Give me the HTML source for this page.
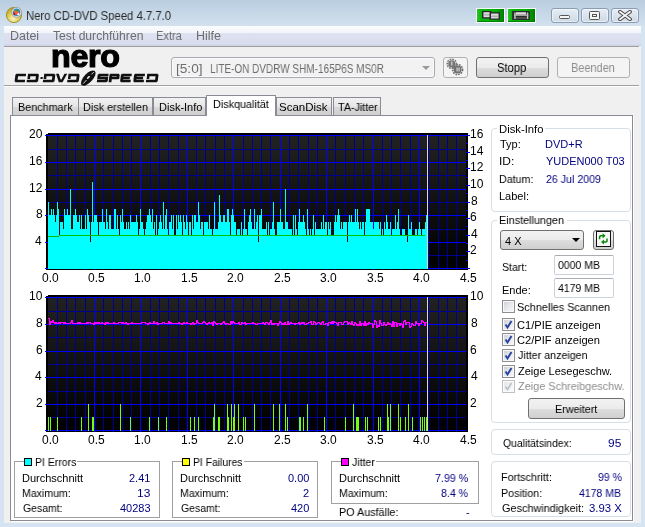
<!DOCTYPE html>
<html><head><meta charset="utf-8"><style>
*{margin:0;padding:0;box-sizing:border-box}
html,body{width:645px;height:527px;overflow:hidden;background:#d6e3f0;font-family:"Liberation Sans", sans-serif;position:relative}
.a{position:absolute}
.t{position:absolute;white-space:nowrap;font-family:"Liberation Sans", sans-serif;line-height:1;transform-origin:0 0;will-change:transform}
.btn{position:absolute;border:1px solid #707070;border-radius:3px;background:linear-gradient(#f2f2f2 0%,#ebebeb 50%,#dddddd 51%,#cfcfcf 100%);}
.btnd{position:absolute;border:1px solid #adb2b5;border-radius:3px;background:#f4f4f4;}
.grp{position:absolute;border:1px solid #d5dfe5;border-radius:4px}
.cgrp{position:absolute;border:1px solid #a0a0a0;box-shadow:1px 1px 0 #fff, inset 1px 1px 0 #fff}
.cb{position:absolute;width:13px;height:13px;border:1px solid #8f8f8f;box-shadow:inset 0 0 0 1px #f8f8f8;background:linear-gradient(135deg,#c9ced8,#e6e8ec 50%,#f8f8f8)}
.tab{position:absolute;top:97px;height:18px;border:1px solid #898c95;border-bottom:none;background:linear-gradient(#f2f2f2,#e6e6e6 50%,#d9d9d9 51%,#d0d0d0)}
</style></head><body>
<!-- window bg / title bar -->
<div class="a" style="left:0;top:0;width:645px;height:26px;background:linear-gradient(#b9cde0,#d3e1ee)"></div>
<div class="a" style="left:0;top:26px;width:645px;height:501px;background:#d6e3f0"></div>
<!-- app icon -->
<svg class="a" style="left:0;top:0" width="30" height="28" shape-rendering="geometricPrecision">
<defs><radialGradient id="ic1" cx="0.45" cy="0.75" r="0.7"><stop offset="0" stop-color="#f8f0c8"/><stop offset="0.5" stop-color="#e0cf58"/><stop offset="1" stop-color="#b8a220"/></radialGradient></defs>
<circle cx="14" cy="15" r="7.6" fill="url(#ic1)" stroke="#9c8a14" stroke-width="0.9"/>
<circle cx="16.6" cy="12.3" r="5" fill="#e8e8e8" stroke="#9a9a9a" stroke-width="0.9"/>
<circle cx="16.6" cy="12.3" r="3.7" fill="#2288dd"/>
<path d="M13.6,11.2 L17.5,10 L19.8,13.8 L16.2,15.2 Z" fill="#f06030"/>
<path d="M16.5,9 L19.5,10.5 L18.8,11.5 L16,10.2Z" fill="#30a040"/>
<path d="M13,12.5 L15,13.2 L15.2,15.6 L13.4,14.6Z" fill="#b01010"/>
<circle cx="18.4" cy="14.2" r="1.1" fill="#fff"/>
<circle cx="13.8" cy="10.6" r="0.7" fill="#ffd020"/>
</svg>
<!-- green buttons -->
<div class="a" style="left:476px;top:8px;width:29px;height:15px;background:rgba(255,255,255,0.85)"></div>
<div class="a" style="left:477px;top:9px;width:27px;height:13px;background:linear-gradient(90deg,#2cc42c 0%,#0cb40c 15%,#00b000 70%,#007a00 100%);box-shadow:inset 0 -1px 0 #008000"></div>
<svg class="a" style="left:477px;top:9px" width="27" height="13">
<rect x="5" y="2" width="9.5" height="7.5" fill="#2a2a2a"/><rect x="6.5" y="3.2" width="6.5" height="5" fill="#dcdcdc"/><rect x="6.5" y="5.5" width="6.5" height="0.8" fill="#909090"/>
<rect x="12.5" y="3.2" width="10.5" height="7.5" fill="#2a2a2a"/><rect x="14" y="4.5" width="7.5" height="5" fill="#d8d8d8"/><rect x="14" y="6.8" width="7.5" height="0.8" fill="#909090"/>
</svg>
<div class="a" style="left:507px;top:8px;width:29px;height:15px;background:rgba(255,255,255,0.85)"></div>
<div class="a" style="left:508px;top:9px;width:27px;height:13px;background:linear-gradient(90deg,#2cc42c 0%,#0cb40c 15%,#00b000 70%,#007a00 100%);box-shadow:inset 0 -1px 0 #008000"></div>
<svg class="a" style="left:508px;top:9px" width="27" height="13">
<rect x="4.2" y="2" width="17.6" height="9" fill="#2a2a2a"/><rect x="8" y="3.2" width="10" height="2.5" fill="#dcdcdc"/><rect x="6.2" y="3.5" width="1.5" height="6.5" fill="#c8c8c8"/><rect x="18.8" y="3.5" width="1.5" height="6.5" fill="#c8c8c8"/><rect x="6.2" y="5.7" width="14" height="1.1" fill="#bcbcbc"/><rect x="8" y="8.5" width="10" height="1" fill="#707070"/>
</svg>
<!-- window buttons -->
<div class="a" style="left:551px;top:8px;width:28px;height:15px;border:1px solid #8b9cb3;border-radius:3px;background:linear-gradient(#e6edf5,#cdd9e6);box-shadow:inset 0 0 0 1px rgba(255,255,255,0.5)"></div>
<div class="a" style="left:559px;top:15px;width:11px;height:4px;background:#f4f4f4;border:1px solid #555;border-radius:1.5px"></div>
<div class="a" style="left:581px;top:8px;width:28px;height:15px;border:1px solid #8b9cb3;border-radius:3px;background:linear-gradient(#e6edf5,#cdd9e6);box-shadow:inset 0 0 0 1px rgba(255,255,255,0.5)"></div>
<div class="a" style="left:589px;top:11px;width:11px;height:9px;background:#f4f4f4;border:1px solid #555;border-radius:1.5px"></div>
<div class="a" style="left:592px;top:14px;width:5px;height:3px;border:1px solid #555"></div>
<div class="a" style="left:611px;top:8px;width:28px;height:15px;border:1px solid #8b9cb3;border-radius:3px;background:linear-gradient(#e6edf5,#cdd9e6);box-shadow:inset 0 0 0 1px rgba(255,255,255,0.5)"></div>
<svg class="a" style="left:618px;top:10px" width="14" height="11" shape-rendering="geometricPrecision"><path d="M2,1.8 L12,9.2 M12,1.8 L2,9.2" stroke="#4a4a4a" stroke-width="3.8" stroke-linecap="round"/><path d="M2,1.8 L12,9.2 M12,1.8 L2,9.2" stroke="#f6f6f6" stroke-width="1.8" stroke-linecap="round"/></svg>
<!-- menu bar -->
<div class="a" style="left:4px;top:26px;width:637px;height:20px;background:linear-gradient(#fbfcfe 0%,#f3f5fa 33%,#dde1f0 36%,#d9ddef 90%,#c9cee2 100%)"></div>
<!-- content -->
<div class="a" style="left:4px;top:46px;width:637px;height:477px;background:#f0f0f0"></div>
<div class="a" style="left:4px;top:46px;width:635px;height:1px;background:#a0a0a0"></div>
<div class="a" style="left:4px;top:85px;width:635px;height:1px;background:#a0a0a0"></div>
<div class="a" style="left:4px;top:86px;width:635px;height:1px;background:#fff"></div>
<!-- logo -->
<div class="t" style="left:51px;top:41px;font-size:31px;font-weight:bold;letter-spacing:-0.3px;-webkit-text-stroke:1.2px #000;color:#000;transform:scaleX(1.04)">nero</div>
<svg class="a" style="left:0;top:0" width="200" height="100" shape-rendering="geometricPrecision"><path d="M16.23,73.70 L26.13,73.70 L25.83,76.20 L15.93,76.20Z M15.45,74.40 L18.25,74.40 L17.38,81.60 L14.58,81.60Z M15.50,79.80 L25.10,79.80 L24.80,82.30 L15.20,82.30Z M28.03,73.70 L38.23,73.70 L37.93,76.20 L27.73,76.20Z M36.15,74.40 L38.95,74.40 L38.08,81.60 L35.28,81.60Z M26.90,79.80 L37.50,79.80 L37.20,82.30 L26.60,82.30Z M28.00,74.00 L30.60,74.00 L30.01,78.90 L27.41,78.90Z M44.23,73.70 L54.63,73.70 L54.33,76.20 L43.93,76.20Z M52.55,74.40 L55.35,74.40 L54.48,81.60 L51.68,81.60Z M43.10,79.80 L53.90,79.80 L53.60,82.30 L42.80,82.30Z M44.20,74.00 L46.80,74.00 L46.21,78.90 L43.61,78.90Z M68.53,73.70 L78.93,73.70 L78.63,76.20 L68.23,76.20Z M76.85,74.40 L79.65,74.40 L78.78,81.60 L75.98,81.60Z M67.40,79.80 L78.20,79.80 L77.90,82.30 L67.10,82.30Z M68.50,74.00 L71.10,74.00 L70.51,78.90 L67.91,78.90Z M98.63,73.70 L108.63,73.70 L108.33,76.20 L98.33,76.20Z M97.75,74.40 L100.55,74.40 L99.97,79.25 L97.17,79.25Z M97.97,76.75 L107.77,76.75 L107.47,79.25 L97.67,79.25Z M105.47,76.75 L108.27,76.75 L107.68,81.60 L104.88,81.60Z M97.10,79.80 L107.10,79.80 L106.80,82.30 L96.80,82.30Z M110.13,73.70 L119.03,73.70 L118.73,76.20 L109.83,76.20Z M116.95,74.40 L119.75,74.40 L119.20,78.95 L116.40,78.95Z M109.77,76.75 L118.67,76.75 L118.37,79.25 L109.47,79.25Z M109.55,74.40 L112.35,74.40 L111.40,82.30 L108.60,82.30Z M121.73,73.70 L131.83,73.70 L131.53,76.20 L121.43,76.20Z M120.95,74.40 L123.75,74.40 L122.88,81.60 L120.08,81.60Z M121.37,76.75 L129.97,76.75 L129.67,79.25 L121.07,79.25Z M121.00,79.80 L130.80,79.80 L130.50,82.30 L120.70,82.30Z M134.93,73.70 L145.03,73.70 L144.73,76.20 L134.63,76.20Z M134.15,74.40 L136.95,74.40 L136.08,81.60 L133.28,81.60Z M134.57,76.75 L143.17,76.75 L142.87,79.25 L134.27,79.25Z M134.20,79.80 L144.00,79.80 L143.70,82.30 L133.90,82.30Z M147.23,73.70 L157.83,73.70 L157.53,76.20 L146.93,76.20Z M155.75,74.40 L158.55,74.40 L157.68,81.60 L154.88,81.60Z M146.10,79.80 L157.10,79.80 L156.80,82.30 L145.80,82.30Z M147.20,74.00 L149.80,74.00 L149.21,78.90 L146.61,78.90Z M40.62,77.10 L42.82,77.10 L42.58,79.10 L40.38,79.10Z M56.03,73.70 L58.83,73.70 L60.62,79.60 L61.42,79.60 L64.43,73.70 L67.23,73.70 L62.50,82.30 L58.80,82.30Z " fill="#111"/><ellipse cx="88.3" cy="78.1" rx="9.6" ry="4.4" transform="rotate(-47 88.3 78.1)" fill="#111"/><path d="M83.2,83.6 L86.5,80 M88.5,77.6 L89.8,76.2 M91.5,74.4 L93.8,72" stroke="#e8e8e8" stroke-width="0.9"/><ellipse cx="88.3" cy="77.5" rx="1.8" ry="0.9" transform="rotate(-47 88.3 77.5)" fill="#f0f0f0"/></svg>
<!-- combo -->
<div class="a" style="left:171px;top:57px;width:264px;height:21px;border:1px solid #a7acb3;border-radius:3px;background:#f2f2f2;box-shadow:inset 0 0 0 1px #fbfbfb"></div>
<div class="a" style="left:422px;top:66px;width:0;height:0;border-left:4px solid transparent;border-right:4px solid transparent;border-top:4px solid #9a9a9a"></div>
<div class="btnd" style="left:443px;top:57px;width:25px;height:21px"></div>
<svg class="a" style="left:443px;top:57px" width="25" height="21" shape-rendering="geometricPrecision">
<circle cx="8.8" cy="6.8" r="3.6" fill="#777"/><circle cx="8.8" cy="6.8" r="4.6" fill="none" stroke="#777" stroke-width="1.6" stroke-dasharray="1.7 1"/>
<circle cx="14.6" cy="12.6" r="4" fill="#707070"/><circle cx="14.6" cy="12.6" r="5" fill="none" stroke="#707070" stroke-width="1.6" stroke-dasharray="1.7 1"/>
<path d="M11,9.5 L12,10.5" stroke="#777" stroke-width="3"/>
<rect x="8.2" y="4.5" width="1.2" height="4" fill="#d8d8d8"/><rect x="13.5" y="10.5" width="1.2" height="4" fill="#d8d8d8"/><rect x="15.5" y="10.5" width="1.2" height="4" fill="#d8d8d8"/>
</svg>
<div class="btn" style="left:476px;top:57px;width:73px;height:21px"></div>
<div class="btnd" style="left:557px;top:57px;width:73px;height:21px"></div>
<!-- tab panel -->
<div class="a" style="left:10px;top:115px;width:623px;height:406px;border:1px solid #898c95;background:#fff;box-shadow:1px 1px 0 #fff"></div>
<div class="tab" style="left:12px;width:67px"></div>
<div class="tab" style="left:78px;width:75px"></div>
<div class="tab" style="left:153px;width:53px"></div>
<div class="tab" style="left:276px;width:56px"></div>
<div class="tab" style="left:333px;width:48px"></div>
<div class="a" style="left:206px;top:95px;width:70px;height:21px;border:1px solid #898c95;border-bottom:none;background:#fff"></div>
<!-- right panel groups -->
<div class="grp" style="left:491px;top:128px;width:140px;height:84px"></div>
<div class="a" style="left:497px;top:122px;width:48px;height:12px;background:#fff"></div>
<div class="grp" style="left:491px;top:220px;width:140px;height:203px"></div>
<div class="a" style="left:497px;top:214px;width:70px;height:12px;background:#fff"></div>
<div class="btn" style="left:500px;top:230px;width:84px;height:20px"></div>
<div class="a" style="left:572px;top:238px;width:0;height:0;border-left:4px solid transparent;border-right:4px solid transparent;border-top:4px solid #000"></div>
<div class="btn" style="left:593px;top:230px;width:21px;height:20px"></div>
<div class="a" style="left:596px;top:231px;width:15px;height:16px;border:1px solid #111;background:#f8f8f8"></div>
<svg class="a" style="left:597px;top:232px" width="13" height="14" shape-rendering="geometricPrecision"><path d="M2.6,7.2 L2.6,4.6 L3.6,3.8 L6,3.8" stroke="#0a8a0a" stroke-width="1.5" fill="none"/><path d="M5.6,1.2 L8.6,3.8 L5.6,6.4Z" fill="#0a8a0a"/><path d="M10,6.6 L10,9.2 L9,10 L6.6,10" stroke="#0a8a0a" stroke-width="1.5" fill="none"/><path d="M7,7.4 L4,10 L7,12.6Z" fill="#0a8a0a"/></svg>
<div class="a" style="left:554px;top:255px;width:60px;height:20px;border:1px solid #c9d3dc;border-top-color:#abadb3;border-radius:2px;background:#fff"></div>
<div class="a" style="left:554px;top:278px;width:60px;height:20px;border:1px solid #c9d3dc;border-top-color:#abadb3;border-radius:2px;background:#fff"></div>
<div class="cb" style="left:502px;top:300px"></div>
<div class="cb" style="left:502px;top:318px"></div>
<div class="cb" style="left:502px;top:333px"></div>
<div class="cb" style="left:502px;top:349px"></div>
<div class="cb" style="left:502px;top:365px"></div>
<div class="cb" style="left:502px;top:380px;opacity:0.55"></div>
<svg class="a" style="left:502px;top:318px" width="13" height="13"><path d="M3.5,6.5 L5.5,9.5 L9.5,3" stroke="#2b42a0" stroke-width="1.9" fill="none"/></svg>
<svg class="a" style="left:502px;top:333px" width="13" height="13"><path d="M3.5,6.5 L5.5,9.5 L9.5,3" stroke="#2b42a0" stroke-width="1.9" fill="none"/></svg>
<svg class="a" style="left:502px;top:349px" width="13" height="13"><path d="M3.5,6.5 L5.5,9.5 L9.5,3" stroke="#2b42a0" stroke-width="1.9" fill="none"/></svg>
<svg class="a" style="left:502px;top:365px" width="13" height="13"><path d="M3.5,6.5 L5.5,9.5 L9.5,3" stroke="#2b42a0" stroke-width="1.9" fill="none"/></svg>
<svg class="a" style="left:502px;top:380px" width="13" height="13"><path d="M3.5,6.5 L5.5,9.5 L9.5,3" stroke="#b8c0cc" stroke-width="1.6" fill="none"/></svg>
<div class="btn" style="left:528px;top:398px;width:97px;height:21px"></div>
<div class="grp" style="left:491px;top:429px;width:140px;height:26px"></div>
<div class="grp" style="left:491px;top:461px;width:140px;height:56px"></div>
<!-- bottom classic groups -->
<div class="cgrp" style="left:14px;top:461px;width:146px;height:57px"></div>
<div class="a" style="left:24px;top:455px;width:53px;height:12px;background:#fff"></div>
<div class="a" style="left:24px;top:458px;width:8px;height:8px;border:1px solid #000;background:#00ffff"></div>
<div class="cgrp" style="left:172px;top:461px;width:146px;height:57px"></div>
<div class="a" style="left:182px;top:455px;width:62px;height:12px;background:#fff"></div>
<div class="a" style="left:182px;top:458px;width:8px;height:8px;border:1px solid #000;background:#ffff00"></div>
<div class="cgrp" style="left:331px;top:461px;width:148px;height:43px"></div>
<div class="a" style="left:341px;top:455px;width:35px;height:12px;background:#fff"></div>
<div class="a" style="left:341px;top:458px;width:8px;height:8px;border:1px solid #000;background:#ff00ff"></div>

<svg width="645" height="527" style="position:absolute;left:0;top:0" shape-rendering="crispEdges">
<defs><linearGradient id="g1" x1="0" y1="0" x2="0" y2="1"><stop offset="0" stop-color="#222"/><stop offset="1" stop-color="#000"/></linearGradient></defs>
<rect x="46" y="133" width="422" height="137" fill="#000"/>
<rect x="48" y="135" width="418" height="134" fill="url(#g1)"/>
<rect x="46" y="133" width="2" height="1" fill="#fff"/>
<rect x="57" y="135" width="1" height="135" fill="#000090"/>
<rect x="66" y="135" width="1" height="135" fill="#000090"/>
<rect x="75" y="135" width="1" height="135" fill="#000090"/>
<rect x="85" y="135" width="1" height="135" fill="#000090"/>
<rect x="94" y="135" width="1" height="135" fill="#0000ff"/>
<rect x="103" y="135" width="1" height="135" fill="#000090"/>
<rect x="113" y="135" width="1" height="135" fill="#000090"/>
<rect x="122" y="135" width="1" height="135" fill="#000090"/>
<rect x="131" y="135" width="1" height="135" fill="#000090"/>
<rect x="140" y="135" width="1" height="135" fill="#0000ff"/>
<rect x="150" y="135" width="1" height="135" fill="#000090"/>
<rect x="159" y="135" width="1" height="135" fill="#000090"/>
<rect x="168" y="135" width="1" height="135" fill="#000090"/>
<rect x="178" y="135" width="1" height="135" fill="#000090"/>
<rect x="187" y="135" width="1" height="135" fill="#0000ff"/>
<rect x="196" y="135" width="1" height="135" fill="#000090"/>
<rect x="205" y="135" width="1" height="135" fill="#000090"/>
<rect x="215" y="135" width="1" height="135" fill="#000090"/>
<rect x="224" y="135" width="1" height="135" fill="#000090"/>
<rect x="233" y="135" width="1" height="135" fill="#0000ff"/>
<rect x="243" y="135" width="1" height="135" fill="#000090"/>
<rect x="252" y="135" width="1" height="135" fill="#000090"/>
<rect x="261" y="135" width="1" height="135" fill="#000090"/>
<rect x="270" y="135" width="1" height="135" fill="#000090"/>
<rect x="280" y="135" width="1" height="135" fill="#0000ff"/>
<rect x="289" y="135" width="1" height="135" fill="#000090"/>
<rect x="298" y="135" width="1" height="135" fill="#000090"/>
<rect x="308" y="135" width="1" height="135" fill="#000090"/>
<rect x="317" y="135" width="1" height="135" fill="#000090"/>
<rect x="326" y="135" width="1" height="135" fill="#0000ff"/>
<rect x="335" y="135" width="1" height="135" fill="#000090"/>
<rect x="345" y="135" width="1" height="135" fill="#000090"/>
<rect x="354" y="135" width="1" height="135" fill="#000090"/>
<rect x="363" y="135" width="1" height="135" fill="#000090"/>
<rect x="373" y="135" width="1" height="135" fill="#0000ff"/>
<rect x="382" y="135" width="1" height="135" fill="#000090"/>
<rect x="391" y="135" width="1" height="135" fill="#000090"/>
<rect x="400" y="135" width="1" height="135" fill="#000090"/>
<rect x="410" y="135" width="1" height="135" fill="#000090"/>
<rect x="419" y="135" width="1" height="135" fill="#0000ff"/>
<rect x="428" y="135" width="1" height="135" fill="#000090"/>
<rect x="438" y="135" width="1" height="135" fill="#000090"/>
<rect x="447" y="135" width="1" height="135" fill="#000090"/>
<rect x="456" y="135" width="1" height="135" fill="#000090"/>
<rect x="45" y="268" width="421" height="1" fill="#0000ff"/>
<rect x="48" y="255" width="418" height="1" fill="#000090"/>
<rect x="45" y="242" width="421" height="1" fill="#0000ff"/>
<rect x="48" y="229" width="418" height="1" fill="#000090"/>
<rect x="45" y="215" width="421" height="1" fill="#0000ff"/>
<rect x="48" y="202" width="418" height="1" fill="#000090"/>
<rect x="45" y="189" width="421" height="1" fill="#0000ff"/>
<rect x="48" y="175" width="418" height="1" fill="#000090"/>
<rect x="45" y="162" width="421" height="1" fill="#0000ff"/>
<rect x="48" y="149" width="418" height="1" fill="#000090"/>
<rect x="45" y="135" width="421" height="1" fill="#0000ff"/>
<rect x="466" y="268" width="4" height="1" fill="#0000ff"/>
<rect x="466" y="260" width="2" height="1" fill="#0000ff"/>
<rect x="466" y="251" width="4" height="1" fill="#0000ff"/>
<rect x="466" y="243" width="2" height="1" fill="#0000ff"/>
<rect x="466" y="235" width="4" height="1" fill="#0000ff"/>
<rect x="466" y="226" width="2" height="1" fill="#0000ff"/>
<rect x="466" y="218" width="4" height="1" fill="#0000ff"/>
<rect x="466" y="210" width="2" height="1" fill="#0000ff"/>
<rect x="466" y="202" width="4" height="1" fill="#0000ff"/>
<rect x="466" y="193" width="2" height="1" fill="#0000ff"/>
<rect x="466" y="185" width="4" height="1" fill="#0000ff"/>
<rect x="466" y="177" width="2" height="1" fill="#0000ff"/>
<rect x="466" y="168" width="4" height="1" fill="#0000ff"/>
<rect x="466" y="160" width="2" height="1" fill="#0000ff"/>
<rect x="466" y="152" width="4" height="1" fill="#0000ff"/>
<rect x="466" y="143" width="2" height="1" fill="#0000ff"/>
<rect x="466" y="135" width="4" height="1" fill="#0000ff"/>
<path d="M48,269 L48,202 L49,202 L49,215 L50,215 L50,215 L51,215 L51,209 L52,209 L52,215 L53,215 L53,209 L54,209 L54,215 L55,215 L55,222 L56,222 L56,215 L57,215 L57,202 L58,202 L58,209 L59,209 L59,235 L60,235 L60,222 L61,222 L61,222 L62,222 L62,222 L63,222 L63,229 L64,229 L64,209 L65,209 L65,215 L66,215 L66,215 L67,215 L67,209 L68,209 L68,215 L69,215 L69,215 L70,215 L70,189 L71,189 L71,229 L72,229 L72,229 L73,229 L73,215 L74,215 L74,215 L75,215 L75,209 L76,209 L76,215 L77,215 L77,222 L78,222 L78,222 L79,222 L79,215 L80,215 L80,229 L81,229 L81,215 L82,215 L82,229 L83,229 L83,229 L84,229 L84,229 L85,229 L85,215 L86,215 L86,229 L87,229 L87,209 L88,209 L88,215 L89,215 L89,222 L90,222 L90,242 L91,242 L91,222 L92,222 L92,182 L93,182 L93,222 L94,222 L94,215 L95,215 L95,215 L96,215 L96,215 L97,215 L97,222 L98,222 L98,235 L99,235 L99,222 L100,222 L100,222 L101,222 L101,222 L102,222 L102,209 L103,209 L103,222 L104,222 L104,222 L105,222 L105,229 L106,229 L106,209 L107,209 L107,222 L108,222 L108,229 L109,229 L109,215 L110,215 L110,215 L111,215 L111,229 L112,229 L112,229 L113,229 L113,229 L114,229 L114,209 L115,209 L115,209 L116,209 L116,229 L117,229 L117,215 L118,215 L118,229 L119,229 L119,235 L120,235 L120,215 L121,215 L121,222 L122,222 L122,209 L123,209 L123,222 L124,222 L124,229 L125,229 L125,229 L126,229 L126,222 L127,222 L127,229 L128,229 L128,222 L129,222 L129,229 L130,229 L130,215 L131,215 L131,222 L132,222 L132,222 L133,222 L133,222 L134,222 L134,222 L135,222 L135,222 L136,222 L136,215 L137,215 L137,222 L138,222 L138,235 L139,235 L139,229 L140,229 L140,209 L141,209 L141,222 L142,222 L142,222 L143,222 L143,229 L144,229 L144,235 L145,235 L145,229 L146,229 L146,222 L147,222 L147,215 L148,215 L148,215 L149,215 L149,209 L150,209 L150,215 L151,215 L151,222 L152,222 L152,209 L153,209 L153,229 L154,229 L154,222 L155,222 L155,235 L156,235 L156,215 L157,215 L157,235 L158,235 L158,229 L159,229 L159,222 L160,222 L160,215 L161,215 L161,222 L162,222 L162,229 L163,229 L163,202 L164,202 L164,229 L165,229 L165,215 L166,215 L166,209 L167,209 L167,229 L168,229 L168,235 L169,235 L169,222 L170,222 L170,222 L171,222 L171,215 L172,215 L172,229 L173,229 L173,215 L174,215 L174,235 L175,235 L175,235 L176,235 L176,215 L177,215 L177,229 L178,229 L178,215 L179,215 L179,222 L180,222 L180,215 L181,215 L181,222 L182,222 L182,235 L183,235 L183,215 L184,215 L184,222 L185,222 L185,229 L186,229 L186,215 L187,215 L187,222 L188,222 L188,235 L189,235 L189,222 L190,222 L190,222 L191,222 L191,235 L192,235 L192,215 L193,215 L193,229 L194,229 L194,215 L195,215 L195,215 L196,215 L196,222 L197,222 L197,222 L198,222 L198,202 L199,202 L199,215 L200,215 L200,229 L201,229 L201,222 L202,222 L202,222 L203,222 L203,235 L204,235 L204,222 L205,222 L205,222 L206,222 L206,222 L207,222 L207,222 L208,222 L208,229 L209,229 L209,215 L210,215 L210,229 L211,229 L211,229 L212,229 L212,235 L213,235 L213,229 L214,229 L214,202 L215,202 L215,229 L216,229 L216,229 L217,229 L217,229 L218,229 L218,222 L219,222 L219,195 L220,195 L220,215 L221,215 L221,222 L222,222 L222,222 L223,222 L223,215 L224,215 L224,215 L225,215 L225,222 L226,222 L226,222 L227,222 L227,209 L228,209 L228,209 L229,209 L229,222 L230,222 L230,235 L231,235 L231,215 L232,215 L232,209 L233,209 L233,215 L234,215 L234,222 L235,222 L235,222 L236,222 L236,235 L237,235 L237,229 L238,229 L238,229 L239,229 L239,229 L240,229 L240,235 L241,235 L241,222 L242,222 L242,235 L243,235 L243,229 L244,229 L244,209 L245,209 L245,229 L246,229 L246,229 L247,229 L247,235 L248,235 L248,222 L249,222 L249,215 L250,215 L250,209 L251,209 L251,222 L252,222 L252,229 L253,229 L253,229 L254,229 L254,209 L255,209 L255,229 L256,229 L256,222 L257,222 L257,215 L258,215 L258,242 L259,242 L259,215 L260,215 L260,215 L261,215 L261,209 L262,209 L262,229 L263,229 L263,229 L264,229 L264,229 L265,229 L265,229 L266,229 L266,222 L267,222 L267,235 L268,235 L268,222 L269,222 L269,235 L270,235 L270,229 L271,229 L271,229 L272,229 L272,222 L273,222 L273,202 L274,202 L274,229 L275,229 L275,235 L276,235 L276,235 L277,235 L277,222 L278,222 L278,222 L279,222 L279,222 L280,222 L280,209 L281,209 L281,222 L282,222 L282,222 L283,222 L283,229 L284,229 L284,229 L285,229 L285,189 L286,189 L286,222 L287,222 L287,222 L288,222 L288,229 L289,229 L289,229 L290,229 L290,229 L291,229 L291,229 L292,229 L292,235 L293,235 L293,215 L294,215 L294,235 L295,235 L295,215 L296,215 L296,229 L297,229 L297,235 L298,235 L298,222 L299,222 L299,209 L300,209 L300,222 L301,222 L301,222 L302,222 L302,222 L303,222 L303,215 L304,215 L304,222 L305,222 L305,229 L306,229 L306,235 L307,235 L307,209 L308,209 L308,229 L309,229 L309,235 L310,235 L310,229 L311,229 L311,235 L312,235 L312,229 L313,229 L313,215 L314,215 L314,235 L315,235 L315,222 L316,222 L316,229 L317,229 L317,229 L318,229 L318,229 L319,229 L319,229 L320,229 L320,229 L321,229 L321,222 L322,222 L322,229 L323,229 L323,215 L324,215 L324,229 L325,229 L325,222 L326,222 L326,222 L327,222 L327,235 L328,235 L328,222 L329,222 L329,229 L330,229 L330,222 L331,222 L331,235 L332,235 L332,235 L333,235 L333,235 L334,235 L334,222 L335,222 L335,215 L336,215 L336,222 L337,222 L337,215 L338,215 L338,209 L339,209 L339,215 L340,215 L340,229 L341,229 L341,222 L342,222 L342,229 L343,229 L343,222 L344,222 L344,222 L345,222 L345,222 L346,222 L346,222 L347,222 L347,242 L348,242 L348,222 L349,222 L349,215 L350,215 L350,222 L351,222 L351,215 L352,215 L352,222 L353,222 L353,222 L354,222 L354,222 L355,222 L355,209 L356,209 L356,222 L357,222 L357,209 L358,209 L358,222 L359,222 L359,229 L360,229 L360,222 L361,222 L361,229 L362,229 L362,222 L363,222 L363,222 L364,222 L364,235 L365,235 L365,222 L366,222 L366,209 L367,209 L367,209 L368,209 L368,209 L369,209 L369,209 L370,209 L370,222 L371,222 L371,222 L372,222 L372,222 L373,222 L373,229 L374,229 L374,222 L375,222 L375,222 L376,222 L376,222 L377,222 L377,222 L378,222 L378,222 L379,222 L379,229 L380,229 L380,222 L381,222 L381,235 L382,235 L382,229 L383,229 L383,235 L384,235 L384,222 L385,222 L385,229 L386,229 L386,215 L387,215 L387,222 L388,222 L388,229 L389,229 L389,229 L390,229 L390,222 L391,222 L391,235 L392,235 L392,229 L393,229 L393,229 L394,229 L394,229 L395,229 L395,215 L396,215 L396,229 L397,229 L397,222 L398,222 L398,209 L399,209 L399,229 L400,229 L400,235 L401,235 L401,235 L402,235 L402,229 L403,229 L403,229 L404,229 L404,229 L405,229 L405,235 L406,235 L406,235 L407,235 L407,242 L408,242 L408,215 L409,215 L409,229 L410,229 L410,229 L411,229 L411,222 L412,222 L412,235 L413,235 L413,235 L414,235 L414,235 L415,235 L415,229 L416,229 L416,229 L417,229 L417,235 L418,235 L418,229 L419,229 L419,222 L420,222 L420,229 L421,229 L421,235 L422,235 L422,229 L423,229 L423,229 L424,229 L424,229 L425,229 L425,222 L426,222 L426,215 L427,215 L427,269 Z" fill="#00ffff" shape-rendering="crispEdges"/>
<rect x="48" y="236" width="11" height="1" fill="#00c000"/>
<rect x="59" y="235" width="366" height="1" fill="#00c000"/>
<rect x="427" y="135" width="1" height="134" fill="#d8d8d8"/>
<rect x="46" y="295" width="422" height="137" fill="#000"/>
<rect x="48" y="297" width="418" height="134" fill="url(#g1)"/>
<rect x="46" y="295" width="2" height="1" fill="#fff"/>
<rect x="57" y="297" width="1" height="135" fill="#000090"/>
<rect x="66" y="297" width="1" height="135" fill="#000090"/>
<rect x="75" y="297" width="1" height="135" fill="#000090"/>
<rect x="85" y="297" width="1" height="135" fill="#000090"/>
<rect x="94" y="297" width="1" height="135" fill="#0000ff"/>
<rect x="103" y="297" width="1" height="135" fill="#000090"/>
<rect x="113" y="297" width="1" height="135" fill="#000090"/>
<rect x="122" y="297" width="1" height="135" fill="#000090"/>
<rect x="131" y="297" width="1" height="135" fill="#000090"/>
<rect x="140" y="297" width="1" height="135" fill="#0000ff"/>
<rect x="150" y="297" width="1" height="135" fill="#000090"/>
<rect x="159" y="297" width="1" height="135" fill="#000090"/>
<rect x="168" y="297" width="1" height="135" fill="#000090"/>
<rect x="178" y="297" width="1" height="135" fill="#000090"/>
<rect x="187" y="297" width="1" height="135" fill="#0000ff"/>
<rect x="196" y="297" width="1" height="135" fill="#000090"/>
<rect x="205" y="297" width="1" height="135" fill="#000090"/>
<rect x="215" y="297" width="1" height="135" fill="#000090"/>
<rect x="224" y="297" width="1" height="135" fill="#000090"/>
<rect x="233" y="297" width="1" height="135" fill="#0000ff"/>
<rect x="243" y="297" width="1" height="135" fill="#000090"/>
<rect x="252" y="297" width="1" height="135" fill="#000090"/>
<rect x="261" y="297" width="1" height="135" fill="#000090"/>
<rect x="270" y="297" width="1" height="135" fill="#000090"/>
<rect x="280" y="297" width="1" height="135" fill="#0000ff"/>
<rect x="289" y="297" width="1" height="135" fill="#000090"/>
<rect x="298" y="297" width="1" height="135" fill="#000090"/>
<rect x="308" y="297" width="1" height="135" fill="#000090"/>
<rect x="317" y="297" width="1" height="135" fill="#000090"/>
<rect x="326" y="297" width="1" height="135" fill="#0000ff"/>
<rect x="335" y="297" width="1" height="135" fill="#000090"/>
<rect x="345" y="297" width="1" height="135" fill="#000090"/>
<rect x="354" y="297" width="1" height="135" fill="#000090"/>
<rect x="363" y="297" width="1" height="135" fill="#000090"/>
<rect x="373" y="297" width="1" height="135" fill="#0000ff"/>
<rect x="382" y="297" width="1" height="135" fill="#000090"/>
<rect x="391" y="297" width="1" height="135" fill="#000090"/>
<rect x="400" y="297" width="1" height="135" fill="#000090"/>
<rect x="410" y="297" width="1" height="135" fill="#000090"/>
<rect x="419" y="297" width="1" height="135" fill="#0000ff"/>
<rect x="428" y="297" width="1" height="135" fill="#000090"/>
<rect x="438" y="297" width="1" height="135" fill="#000090"/>
<rect x="447" y="297" width="1" height="135" fill="#000090"/>
<rect x="456" y="297" width="1" height="135" fill="#000090"/>
<rect x="45" y="430" width="421" height="1" fill="#0000ff"/>
<rect x="48" y="417" width="418" height="1" fill="#000090"/>
<rect x="45" y="404" width="421" height="1" fill="#0000ff"/>
<rect x="48" y="391" width="418" height="1" fill="#000090"/>
<rect x="45" y="377" width="421" height="1" fill="#0000ff"/>
<rect x="48" y="364" width="418" height="1" fill="#000090"/>
<rect x="45" y="351" width="421" height="1" fill="#0000ff"/>
<rect x="48" y="337" width="418" height="1" fill="#000090"/>
<rect x="45" y="324" width="421" height="1" fill="#0000ff"/>
<rect x="48" y="311" width="418" height="1" fill="#000090"/>
<rect x="45" y="297" width="421" height="1" fill="#0000ff"/>
<rect x="48" y="417" width="1" height="14" fill="#70ff10"/>
<rect x="50" y="417" width="1" height="14" fill="#70ff10"/>
<rect x="57" y="417" width="1" height="14" fill="#70ff10"/>
<rect x="81" y="417" width="1" height="14" fill="#70ff10"/>
<rect x="92" y="417" width="1" height="14" fill="#70ff10"/>
<rect x="93" y="417" width="1" height="14" fill="#70ff10"/>
<rect x="130" y="417" width="1" height="14" fill="#70ff10"/>
<rect x="149" y="417" width="1" height="14" fill="#70ff10"/>
<rect x="158" y="417" width="1" height="14" fill="#70ff10"/>
<rect x="166" y="417" width="1" height="14" fill="#70ff10"/>
<rect x="190" y="417" width="1" height="14" fill="#70ff10"/>
<rect x="194" y="417" width="1" height="14" fill="#70ff10"/>
<rect x="198" y="417" width="1" height="14" fill="#70ff10"/>
<rect x="213" y="417" width="1" height="14" fill="#70ff10"/>
<rect x="214" y="417" width="1" height="14" fill="#70ff10"/>
<rect x="218" y="417" width="1" height="14" fill="#70ff10"/>
<rect x="219" y="417" width="1" height="14" fill="#70ff10"/>
<rect x="227" y="417" width="1" height="14" fill="#70ff10"/>
<rect x="228" y="417" width="1" height="14" fill="#70ff10"/>
<rect x="233" y="417" width="1" height="14" fill="#70ff10"/>
<rect x="234" y="417" width="1" height="14" fill="#70ff10"/>
<rect x="243" y="417" width="1" height="14" fill="#70ff10"/>
<rect x="245" y="417" width="1" height="14" fill="#70ff10"/>
<rect x="287" y="417" width="1" height="14" fill="#70ff10"/>
<rect x="299" y="417" width="1" height="14" fill="#70ff10"/>
<rect x="300" y="417" width="1" height="14" fill="#70ff10"/>
<rect x="303" y="417" width="1" height="14" fill="#70ff10"/>
<rect x="324" y="417" width="1" height="14" fill="#70ff10"/>
<rect x="345" y="417" width="1" height="14" fill="#70ff10"/>
<rect x="356" y="417" width="1" height="14" fill="#70ff10"/>
<rect x="357" y="417" width="1" height="14" fill="#70ff10"/>
<rect x="358" y="417" width="1" height="14" fill="#70ff10"/>
<rect x="365" y="417" width="1" height="14" fill="#70ff10"/>
<rect x="367" y="417" width="1" height="14" fill="#70ff10"/>
<rect x="378" y="417" width="1" height="14" fill="#70ff10"/>
<rect x="380" y="417" width="1" height="14" fill="#70ff10"/>
<rect x="388" y="417" width="1" height="14" fill="#70ff10"/>
<rect x="400" y="417" width="1" height="14" fill="#70ff10"/>
<rect x="405" y="417" width="1" height="14" fill="#70ff10"/>
<rect x="412" y="417" width="1" height="14" fill="#70ff10"/>
<rect x="420" y="417" width="1" height="14" fill="#70ff10"/>
<rect x="422" y="417" width="1" height="14" fill="#70ff10"/>
<rect x="424" y="417" width="1" height="14" fill="#70ff10"/>
<rect x="426" y="417" width="1" height="14" fill="#70ff10"/>
<rect x="88" y="404" width="1" height="27" fill="#80f810"/>
<rect x="120" y="404" width="1" height="27" fill="#80f810"/>
<rect x="214" y="404" width="1" height="27" fill="#80f810"/>
<rect x="227" y="404" width="1" height="27" fill="#80f810"/>
<rect x="231" y="404" width="1" height="27" fill="#80f810"/>
<rect x="234" y="404" width="1" height="27" fill="#80f810"/>
<rect x="238" y="404" width="1" height="27" fill="#80f810"/>
<rect x="254" y="404" width="1" height="27" fill="#80f810"/>
<rect x="273" y="404" width="1" height="27" fill="#80f810"/>
<rect x="279" y="404" width="1" height="27" fill="#80f810"/>
<rect x="285" y="404" width="1" height="27" fill="#80f810"/>
<rect x="307" y="404" width="1" height="27" fill="#80f810"/>
<rect x="353" y="404" width="1" height="27" fill="#80f810"/>
<rect x="387" y="404" width="1" height="27" fill="#80f810"/>
<rect x="390" y="404" width="1" height="27" fill="#80f810"/>
<rect x="398" y="404" width="1" height="27" fill="#80f810"/>
<rect x="408" y="404" width="1" height="27" fill="#80f810"/>
<rect x="48" y="318" width="1" height="1" fill="#ff00ff"/>
<rect x="49" y="318" width="1" height="7" fill="#ff00ff"/>
<rect x="50" y="321" width="1" height="4" fill="#ff00ff"/>
<rect x="51" y="321" width="1" height="2" fill="#ff00ff"/>
<rect x="52" y="320" width="1" height="3" fill="#ff00ff"/>
<rect x="53" y="320" width="1" height="3" fill="#ff00ff"/>
<rect x="54" y="322" width="1" height="2" fill="#ff00ff"/>
<rect x="55" y="322" width="1" height="2" fill="#ff00ff"/>
<rect x="56" y="322" width="1" height="2" fill="#ff00ff"/>
<rect x="57" y="323" width="1" height="1" fill="#ff00ff"/>
<rect x="58" y="322" width="1" height="2" fill="#ff00ff"/>
<rect x="59" y="322" width="1" height="2" fill="#ff00ff"/>
<rect x="60" y="322" width="1" height="2" fill="#ff00ff"/>
<rect x="61" y="322" width="1" height="1" fill="#ff00ff"/>
<rect x="62" y="322" width="1" height="1" fill="#ff00ff"/>
<rect x="63" y="322" width="1" height="2" fill="#ff00ff"/>
<rect x="64" y="322" width="1" height="2" fill="#ff00ff"/>
<rect x="65" y="322" width="1" height="2" fill="#ff00ff"/>
<rect x="66" y="323" width="1" height="1" fill="#ff00ff"/>
<rect x="67" y="323" width="1" height="1" fill="#ff00ff"/>
<rect x="68" y="323" width="1" height="1" fill="#ff00ff"/>
<rect x="69" y="323" width="1" height="1" fill="#ff00ff"/>
<rect x="70" y="322" width="1" height="2" fill="#ff00ff"/>
<rect x="71" y="320" width="1" height="3" fill="#ff00ff"/>
<rect x="72" y="320" width="1" height="4" fill="#ff00ff"/>
<rect x="73" y="323" width="1" height="1" fill="#ff00ff"/>
<rect x="74" y="323" width="1" height="1" fill="#ff00ff"/>
<rect x="75" y="323" width="1" height="1" fill="#ff00ff"/>
<rect x="76" y="323" width="1" height="1" fill="#ff00ff"/>
<rect x="77" y="322" width="1" height="2" fill="#ff00ff"/>
<rect x="78" y="322" width="1" height="2" fill="#ff00ff"/>
<rect x="79" y="322" width="1" height="2" fill="#ff00ff"/>
<rect x="80" y="322" width="1" height="2" fill="#ff00ff"/>
<rect x="81" y="323" width="1" height="1" fill="#ff00ff"/>
<rect x="82" y="323" width="1" height="1" fill="#ff00ff"/>
<rect x="83" y="323" width="1" height="1" fill="#ff00ff"/>
<rect x="84" y="323" width="1" height="1" fill="#ff00ff"/>
<rect x="85" y="323" width="1" height="1" fill="#ff00ff"/>
<rect x="86" y="322" width="1" height="2" fill="#ff00ff"/>
<rect x="87" y="322" width="1" height="2" fill="#ff00ff"/>
<rect x="88" y="322" width="1" height="2" fill="#ff00ff"/>
<rect x="89" y="322" width="1" height="1" fill="#ff00ff"/>
<rect x="90" y="322" width="1" height="2" fill="#ff00ff"/>
<rect x="91" y="323" width="1" height="1" fill="#ff00ff"/>
<rect x="92" y="323" width="1" height="1" fill="#ff00ff"/>
<rect x="93" y="323" width="1" height="2" fill="#ff00ff"/>
<rect x="94" y="322" width="1" height="3" fill="#ff00ff"/>
<rect x="95" y="322" width="1" height="2" fill="#ff00ff"/>
<rect x="96" y="322" width="1" height="2" fill="#ff00ff"/>
<rect x="97" y="322" width="1" height="2" fill="#ff00ff"/>
<rect x="98" y="322" width="1" height="2" fill="#ff00ff"/>
<rect x="99" y="322" width="1" height="2" fill="#ff00ff"/>
<rect x="100" y="323" width="1" height="1" fill="#ff00ff"/>
<rect x="101" y="322" width="1" height="2" fill="#ff00ff"/>
<rect x="102" y="322" width="1" height="2" fill="#ff00ff"/>
<rect x="103" y="323" width="1" height="1" fill="#ff00ff"/>
<rect x="104" y="323" width="1" height="2" fill="#ff00ff"/>
<rect x="105" y="322" width="1" height="3" fill="#ff00ff"/>
<rect x="106" y="322" width="1" height="2" fill="#ff00ff"/>
<rect x="107" y="322" width="1" height="2" fill="#ff00ff"/>
<rect x="108" y="322" width="1" height="2" fill="#ff00ff"/>
<rect x="109" y="323" width="1" height="1" fill="#ff00ff"/>
<rect x="110" y="323" width="1" height="1" fill="#ff00ff"/>
<rect x="111" y="323" width="1" height="1" fill="#ff00ff"/>
<rect x="112" y="323" width="1" height="1" fill="#ff00ff"/>
<rect x="113" y="322" width="1" height="2" fill="#ff00ff"/>
<rect x="114" y="322" width="1" height="2" fill="#ff00ff"/>
<rect x="115" y="323" width="1" height="1" fill="#ff00ff"/>
<rect x="116" y="323" width="1" height="1" fill="#ff00ff"/>
<rect x="117" y="323" width="1" height="1" fill="#ff00ff"/>
<rect x="118" y="322" width="1" height="2" fill="#ff00ff"/>
<rect x="119" y="322" width="1" height="1" fill="#ff00ff"/>
<rect x="120" y="322" width="1" height="1" fill="#ff00ff"/>
<rect x="121" y="322" width="1" height="2" fill="#ff00ff"/>
<rect x="122" y="322" width="1" height="2" fill="#ff00ff"/>
<rect x="123" y="322" width="1" height="2" fill="#ff00ff"/>
<rect x="124" y="323" width="1" height="1" fill="#ff00ff"/>
<rect x="125" y="322" width="1" height="2" fill="#ff00ff"/>
<rect x="126" y="322" width="1" height="2" fill="#ff00ff"/>
<rect x="127" y="323" width="1" height="2" fill="#ff00ff"/>
<rect x="128" y="323" width="1" height="2" fill="#ff00ff"/>
<rect x="129" y="323" width="1" height="1" fill="#ff00ff"/>
<rect x="130" y="323" width="1" height="1" fill="#ff00ff"/>
<rect x="131" y="322" width="1" height="2" fill="#ff00ff"/>
<rect x="132" y="322" width="1" height="2" fill="#ff00ff"/>
<rect x="133" y="323" width="1" height="1" fill="#ff00ff"/>
<rect x="134" y="323" width="1" height="1" fill="#ff00ff"/>
<rect x="135" y="323" width="1" height="1" fill="#ff00ff"/>
<rect x="136" y="323" width="1" height="1" fill="#ff00ff"/>
<rect x="137" y="323" width="1" height="1" fill="#ff00ff"/>
<rect x="138" y="323" width="1" height="1" fill="#ff00ff"/>
<rect x="139" y="323" width="1" height="1" fill="#ff00ff"/>
<rect x="140" y="323" width="1" height="1" fill="#ff00ff"/>
<rect x="141" y="322" width="1" height="2" fill="#ff00ff"/>
<rect x="142" y="322" width="1" height="1" fill="#ff00ff"/>
<rect x="143" y="322" width="1" height="1" fill="#ff00ff"/>
<rect x="144" y="322" width="1" height="1" fill="#ff00ff"/>
<rect x="145" y="322" width="1" height="2" fill="#ff00ff"/>
<rect x="146" y="323" width="1" height="1" fill="#ff00ff"/>
<rect x="147" y="323" width="1" height="2" fill="#ff00ff"/>
<rect x="148" y="323" width="1" height="2" fill="#ff00ff"/>
<rect x="149" y="322" width="1" height="2" fill="#ff00ff"/>
<rect x="150" y="322" width="1" height="2" fill="#ff00ff"/>
<rect x="151" y="323" width="1" height="1" fill="#ff00ff"/>
<rect x="152" y="323" width="1" height="1" fill="#ff00ff"/>
<rect x="153" y="321" width="1" height="3" fill="#ff00ff"/>
<rect x="154" y="321" width="1" height="3" fill="#ff00ff"/>
<rect x="155" y="323" width="1" height="1" fill="#ff00ff"/>
<rect x="156" y="322" width="1" height="2" fill="#ff00ff"/>
<rect x="157" y="322" width="1" height="3" fill="#ff00ff"/>
<rect x="158" y="323" width="1" height="2" fill="#ff00ff"/>
<rect x="159" y="323" width="1" height="1" fill="#ff00ff"/>
<rect x="160" y="323" width="1" height="1" fill="#ff00ff"/>
<rect x="161" y="323" width="1" height="1" fill="#ff00ff"/>
<rect x="162" y="322" width="1" height="2" fill="#ff00ff"/>
<rect x="163" y="322" width="1" height="1" fill="#ff00ff"/>
<rect x="164" y="322" width="1" height="2" fill="#ff00ff"/>
<rect x="165" y="323" width="1" height="1" fill="#ff00ff"/>
<rect x="166" y="323" width="1" height="1" fill="#ff00ff"/>
<rect x="167" y="323" width="1" height="1" fill="#ff00ff"/>
<rect x="168" y="321" width="1" height="3" fill="#ff00ff"/>
<rect x="169" y="321" width="1" height="3" fill="#ff00ff"/>
<rect x="170" y="322" width="1" height="2" fill="#ff00ff"/>
<rect x="171" y="322" width="1" height="2" fill="#ff00ff"/>
<rect x="172" y="323" width="1" height="1" fill="#ff00ff"/>
<rect x="173" y="323" width="1" height="1" fill="#ff00ff"/>
<rect x="174" y="323" width="1" height="1" fill="#ff00ff"/>
<rect x="175" y="323" width="1" height="1" fill="#ff00ff"/>
<rect x="176" y="323" width="1" height="1" fill="#ff00ff"/>
<rect x="177" y="323" width="1" height="1" fill="#ff00ff"/>
<rect x="178" y="322" width="1" height="2" fill="#ff00ff"/>
<rect x="179" y="322" width="1" height="2" fill="#ff00ff"/>
<rect x="180" y="323" width="1" height="1" fill="#ff00ff"/>
<rect x="181" y="323" width="1" height="2" fill="#ff00ff"/>
<rect x="182" y="323" width="1" height="2" fill="#ff00ff"/>
<rect x="183" y="322" width="1" height="2" fill="#ff00ff"/>
<rect x="184" y="322" width="1" height="2" fill="#ff00ff"/>
<rect x="185" y="323" width="1" height="1" fill="#ff00ff"/>
<rect x="186" y="322" width="1" height="2" fill="#ff00ff"/>
<rect x="187" y="322" width="1" height="2" fill="#ff00ff"/>
<rect x="188" y="323" width="1" height="1" fill="#ff00ff"/>
<rect x="189" y="323" width="1" height="1" fill="#ff00ff"/>
<rect x="190" y="323" width="1" height="2" fill="#ff00ff"/>
<rect x="191" y="323" width="1" height="2" fill="#ff00ff"/>
<rect x="192" y="322" width="1" height="2" fill="#ff00ff"/>
<rect x="193" y="322" width="1" height="3" fill="#ff00ff"/>
<rect x="194" y="323" width="1" height="2" fill="#ff00ff"/>
<rect x="195" y="323" width="1" height="1" fill="#ff00ff"/>
<rect x="196" y="320" width="1" height="4" fill="#ff00ff"/>
<rect x="197" y="320" width="1" height="3" fill="#ff00ff"/>
<rect x="198" y="322" width="1" height="2" fill="#ff00ff"/>
<rect x="199" y="323" width="1" height="1" fill="#ff00ff"/>
<rect x="200" y="323" width="1" height="1" fill="#ff00ff"/>
<rect x="201" y="323" width="1" height="1" fill="#ff00ff"/>
<rect x="202" y="322" width="1" height="2" fill="#ff00ff"/>
<rect x="203" y="321" width="1" height="2" fill="#ff00ff"/>
<rect x="204" y="321" width="1" height="2" fill="#ff00ff"/>
<rect x="205" y="322" width="1" height="2" fill="#ff00ff"/>
<rect x="206" y="323" width="1" height="2" fill="#ff00ff"/>
<rect x="207" y="323" width="1" height="2" fill="#ff00ff"/>
<rect x="208" y="322" width="1" height="2" fill="#ff00ff"/>
<rect x="209" y="322" width="1" height="2" fill="#ff00ff"/>
<rect x="210" y="323" width="1" height="1" fill="#ff00ff"/>
<rect x="211" y="322" width="1" height="2" fill="#ff00ff"/>
<rect x="212" y="322" width="1" height="4" fill="#ff00ff"/>
<rect x="213" y="321" width="1" height="5" fill="#ff00ff"/>
<rect x="214" y="321" width="1" height="2" fill="#ff00ff"/>
<rect x="215" y="322" width="1" height="2" fill="#ff00ff"/>
<rect x="216" y="323" width="1" height="2" fill="#ff00ff"/>
<rect x="217" y="323" width="1" height="2" fill="#ff00ff"/>
<rect x="218" y="323" width="1" height="1" fill="#ff00ff"/>
<rect x="219" y="323" width="1" height="1" fill="#ff00ff"/>
<rect x="220" y="323" width="1" height="2" fill="#ff00ff"/>
<rect x="221" y="323" width="1" height="2" fill="#ff00ff"/>
<rect x="222" y="322" width="1" height="2" fill="#ff00ff"/>
<rect x="223" y="321" width="1" height="2" fill="#ff00ff"/>
<rect x="224" y="321" width="1" height="3" fill="#ff00ff"/>
<rect x="225" y="323" width="1" height="2" fill="#ff00ff"/>
<rect x="226" y="323" width="1" height="2" fill="#ff00ff"/>
<rect x="227" y="323" width="1" height="1" fill="#ff00ff"/>
<rect x="228" y="323" width="1" height="2" fill="#ff00ff"/>
<rect x="229" y="324" width="1" height="1" fill="#ff00ff"/>
<rect x="230" y="321" width="1" height="4" fill="#ff00ff"/>
<rect x="231" y="321" width="1" height="3" fill="#ff00ff"/>
<rect x="232" y="321" width="1" height="3" fill="#ff00ff"/>
<rect x="233" y="321" width="1" height="2" fill="#ff00ff"/>
<rect x="234" y="322" width="1" height="2" fill="#ff00ff"/>
<rect x="235" y="323" width="1" height="1" fill="#ff00ff"/>
<rect x="236" y="323" width="1" height="1" fill="#ff00ff"/>
<rect x="237" y="323" width="1" height="1" fill="#ff00ff"/>
<rect x="238" y="322" width="1" height="2" fill="#ff00ff"/>
<rect x="239" y="322" width="1" height="3" fill="#ff00ff"/>
<rect x="240" y="324" width="1" height="1" fill="#ff00ff"/>
<rect x="241" y="322" width="1" height="3" fill="#ff00ff"/>
<rect x="242" y="322" width="1" height="2" fill="#ff00ff"/>
<rect x="243" y="323" width="1" height="1" fill="#ff00ff"/>
<rect x="244" y="322" width="1" height="2" fill="#ff00ff"/>
<rect x="245" y="322" width="1" height="3" fill="#ff00ff"/>
<rect x="246" y="323" width="1" height="2" fill="#ff00ff"/>
<rect x="247" y="323" width="1" height="1" fill="#ff00ff"/>
<rect x="248" y="323" width="1" height="1" fill="#ff00ff"/>
<rect x="249" y="323" width="1" height="1" fill="#ff00ff"/>
<rect x="250" y="323" width="1" height="1" fill="#ff00ff"/>
<rect x="251" y="323" width="1" height="1" fill="#ff00ff"/>
<rect x="252" y="322" width="1" height="2" fill="#ff00ff"/>
<rect x="253" y="322" width="1" height="2" fill="#ff00ff"/>
<rect x="254" y="323" width="1" height="1" fill="#ff00ff"/>
<rect x="255" y="323" width="1" height="2" fill="#ff00ff"/>
<rect x="256" y="324" width="1" height="1" fill="#ff00ff"/>
<rect x="257" y="323" width="1" height="2" fill="#ff00ff"/>
<rect x="258" y="323" width="1" height="1" fill="#ff00ff"/>
<rect x="259" y="323" width="1" height="1" fill="#ff00ff"/>
<rect x="260" y="323" width="1" height="1" fill="#ff00ff"/>
<rect x="261" y="323" width="1" height="1" fill="#ff00ff"/>
<rect x="262" y="322" width="1" height="2" fill="#ff00ff"/>
<rect x="263" y="322" width="1" height="2" fill="#ff00ff"/>
<rect x="264" y="323" width="1" height="2" fill="#ff00ff"/>
<rect x="265" y="322" width="1" height="3" fill="#ff00ff"/>
<rect x="266" y="322" width="1" height="1" fill="#ff00ff"/>
<rect x="267" y="322" width="1" height="2" fill="#ff00ff"/>
<rect x="268" y="323" width="1" height="2" fill="#ff00ff"/>
<rect x="269" y="322" width="1" height="3" fill="#ff00ff"/>
<rect x="270" y="320" width="1" height="3" fill="#ff00ff"/>
<rect x="271" y="320" width="1" height="5" fill="#ff00ff"/>
<rect x="272" y="323" width="1" height="2" fill="#ff00ff"/>
<rect x="273" y="323" width="1" height="2" fill="#ff00ff"/>
<rect x="274" y="323" width="1" height="2" fill="#ff00ff"/>
<rect x="275" y="323" width="1" height="1" fill="#ff00ff"/>
<rect x="276" y="323" width="1" height="1" fill="#ff00ff"/>
<rect x="277" y="323" width="1" height="3" fill="#ff00ff"/>
<rect x="278" y="323" width="1" height="3" fill="#ff00ff"/>
<rect x="279" y="321" width="1" height="3" fill="#ff00ff"/>
<rect x="280" y="321" width="1" height="2" fill="#ff00ff"/>
<rect x="281" y="322" width="1" height="3" fill="#ff00ff"/>
<rect x="282" y="323" width="1" height="2" fill="#ff00ff"/>
<rect x="283" y="323" width="1" height="2" fill="#ff00ff"/>
<rect x="284" y="322" width="1" height="3" fill="#ff00ff"/>
<rect x="285" y="322" width="1" height="3" fill="#ff00ff"/>
<rect x="286" y="324" width="1" height="1" fill="#ff00ff"/>
<rect x="287" y="321" width="1" height="4" fill="#ff00ff"/>
<rect x="288" y="321" width="1" height="4" fill="#ff00ff"/>
<rect x="289" y="323" width="1" height="2" fill="#ff00ff"/>
<rect x="290" y="322" width="1" height="2" fill="#ff00ff"/>
<rect x="291" y="322" width="1" height="2" fill="#ff00ff"/>
<rect x="292" y="323" width="1" height="1" fill="#ff00ff"/>
<rect x="293" y="323" width="1" height="1" fill="#ff00ff"/>
<rect x="294" y="323" width="1" height="2" fill="#ff00ff"/>
<rect x="295" y="323" width="1" height="2" fill="#ff00ff"/>
<rect x="296" y="323" width="1" height="1" fill="#ff00ff"/>
<rect x="297" y="323" width="1" height="1" fill="#ff00ff"/>
<rect x="298" y="322" width="1" height="2" fill="#ff00ff"/>
<rect x="299" y="322" width="1" height="3" fill="#ff00ff"/>
<rect x="300" y="323" width="1" height="2" fill="#ff00ff"/>
<rect x="301" y="322" width="1" height="2" fill="#ff00ff"/>
<rect x="302" y="322" width="1" height="2" fill="#ff00ff"/>
<rect x="303" y="322" width="1" height="2" fill="#ff00ff"/>
<rect x="304" y="322" width="1" height="3" fill="#ff00ff"/>
<rect x="305" y="324" width="1" height="1" fill="#ff00ff"/>
<rect x="306" y="323" width="1" height="2" fill="#ff00ff"/>
<rect x="307" y="323" width="1" height="1" fill="#ff00ff"/>
<rect x="308" y="322" width="1" height="2" fill="#ff00ff"/>
<rect x="309" y="322" width="1" height="1" fill="#ff00ff"/>
<rect x="310" y="321" width="1" height="2" fill="#ff00ff"/>
<rect x="311" y="321" width="1" height="4" fill="#ff00ff"/>
<rect x="312" y="324" width="1" height="1" fill="#ff00ff"/>
<rect x="313" y="321" width="1" height="4" fill="#ff00ff"/>
<rect x="314" y="321" width="1" height="2" fill="#ff00ff"/>
<rect x="315" y="322" width="1" height="3" fill="#ff00ff"/>
<rect x="316" y="323" width="1" height="2" fill="#ff00ff"/>
<rect x="317" y="322" width="1" height="2" fill="#ff00ff"/>
<rect x="318" y="322" width="1" height="1" fill="#ff00ff"/>
<rect x="319" y="322" width="1" height="2" fill="#ff00ff"/>
<rect x="320" y="323" width="1" height="2" fill="#ff00ff"/>
<rect x="321" y="322" width="1" height="3" fill="#ff00ff"/>
<rect x="322" y="321" width="1" height="2" fill="#ff00ff"/>
<rect x="323" y="321" width="1" height="4" fill="#ff00ff"/>
<rect x="324" y="324" width="1" height="1" fill="#ff00ff"/>
<rect x="325" y="323" width="1" height="2" fill="#ff00ff"/>
<rect x="326" y="323" width="1" height="1" fill="#ff00ff"/>
<rect x="327" y="323" width="1" height="3" fill="#ff00ff"/>
<rect x="328" y="322" width="1" height="4" fill="#ff00ff"/>
<rect x="329" y="322" width="1" height="1" fill="#ff00ff"/>
<rect x="330" y="322" width="1" height="2" fill="#ff00ff"/>
<rect x="331" y="321" width="1" height="3" fill="#ff00ff"/>
<rect x="332" y="321" width="1" height="3" fill="#ff00ff"/>
<rect x="333" y="321" width="1" height="3" fill="#ff00ff"/>
<rect x="334" y="321" width="1" height="2" fill="#ff00ff"/>
<rect x="335" y="322" width="1" height="1" fill="#ff00ff"/>
<rect x="336" y="322" width="1" height="2" fill="#ff00ff"/>
<rect x="337" y="323" width="1" height="3" fill="#ff00ff"/>
<rect x="338" y="322" width="1" height="4" fill="#ff00ff"/>
<rect x="339" y="322" width="1" height="1" fill="#ff00ff"/>
<rect x="340" y="322" width="1" height="1" fill="#ff00ff"/>
<rect x="341" y="322" width="1" height="3" fill="#ff00ff"/>
<rect x="342" y="324" width="1" height="1" fill="#ff00ff"/>
<rect x="343" y="322" width="1" height="3" fill="#ff00ff"/>
<rect x="344" y="321" width="1" height="2" fill="#ff00ff"/>
<rect x="345" y="321" width="1" height="1" fill="#ff00ff"/>
<rect x="346" y="321" width="1" height="1" fill="#ff00ff"/>
<rect x="347" y="321" width="1" height="4" fill="#ff00ff"/>
<rect x="348" y="322" width="1" height="3" fill="#ff00ff"/>
<rect x="349" y="322" width="1" height="2" fill="#ff00ff"/>
<rect x="350" y="323" width="1" height="2" fill="#ff00ff"/>
<rect x="351" y="321" width="1" height="4" fill="#ff00ff"/>
<rect x="352" y="321" width="1" height="4" fill="#ff00ff"/>
<rect x="353" y="324" width="1" height="2" fill="#ff00ff"/>
<rect x="354" y="322" width="1" height="4" fill="#ff00ff"/>
<rect x="355" y="322" width="1" height="2" fill="#ff00ff"/>
<rect x="356" y="323" width="1" height="3" fill="#ff00ff"/>
<rect x="357" y="324" width="1" height="2" fill="#ff00ff"/>
<rect x="358" y="324" width="1" height="2" fill="#ff00ff"/>
<rect x="359" y="321" width="1" height="5" fill="#ff00ff"/>
<rect x="360" y="321" width="1" height="5" fill="#ff00ff"/>
<rect x="361" y="323" width="1" height="3" fill="#ff00ff"/>
<rect x="362" y="323" width="1" height="1" fill="#ff00ff"/>
<rect x="363" y="323" width="1" height="3" fill="#ff00ff"/>
<rect x="364" y="321" width="1" height="5" fill="#ff00ff"/>
<rect x="365" y="321" width="1" height="5" fill="#ff00ff"/>
<rect x="366" y="323" width="1" height="3" fill="#ff00ff"/>
<rect x="367" y="323" width="1" height="2" fill="#ff00ff"/>
<rect x="368" y="322" width="1" height="3" fill="#ff00ff"/>
<rect x="369" y="322" width="1" height="2" fill="#ff00ff"/>
<rect x="370" y="323" width="1" height="1" fill="#ff00ff"/>
<rect x="371" y="323" width="1" height="1" fill="#ff00ff"/>
<rect x="372" y="323" width="1" height="5" fill="#ff00ff"/>
<rect x="373" y="324" width="1" height="4" fill="#ff00ff"/>
<rect x="374" y="320" width="1" height="5" fill="#ff00ff"/>
<rect x="375" y="320" width="1" height="2" fill="#ff00ff"/>
<rect x="376" y="321" width="1" height="7" fill="#ff00ff"/>
<rect x="377" y="325" width="1" height="3" fill="#ff00ff"/>
<rect x="378" y="325" width="1" height="2" fill="#ff00ff"/>
<rect x="379" y="320" width="1" height="7" fill="#ff00ff"/>
<rect x="380" y="320" width="1" height="4" fill="#ff00ff"/>
<rect x="381" y="323" width="1" height="3" fill="#ff00ff"/>
<rect x="382" y="325" width="1" height="1" fill="#ff00ff"/>
<rect x="383" y="322" width="1" height="4" fill="#ff00ff"/>
<rect x="384" y="322" width="1" height="3" fill="#ff00ff"/>
<rect x="385" y="324" width="1" height="2" fill="#ff00ff"/>
<rect x="386" y="324" width="1" height="2" fill="#ff00ff"/>
<rect x="387" y="322" width="1" height="3" fill="#ff00ff"/>
<rect x="388" y="322" width="1" height="3" fill="#ff00ff"/>
<rect x="389" y="323" width="1" height="2" fill="#ff00ff"/>
<rect x="390" y="323" width="1" height="2" fill="#ff00ff"/>
<rect x="391" y="324" width="1" height="3" fill="#ff00ff"/>
<rect x="392" y="321" width="1" height="6" fill="#ff00ff"/>
<rect x="393" y="321" width="1" height="6" fill="#ff00ff"/>
<rect x="394" y="322" width="1" height="5" fill="#ff00ff"/>
<rect x="395" y="322" width="1" height="1" fill="#ff00ff"/>
<rect x="396" y="322" width="1" height="5" fill="#ff00ff"/>
<rect x="397" y="323" width="1" height="4" fill="#ff00ff"/>
<rect x="398" y="323" width="1" height="1" fill="#ff00ff"/>
<rect x="399" y="323" width="1" height="3" fill="#ff00ff"/>
<rect x="400" y="323" width="1" height="3" fill="#ff00ff"/>
<rect x="401" y="323" width="1" height="2" fill="#ff00ff"/>
<rect x="402" y="324" width="1" height="4" fill="#ff00ff"/>
<rect x="403" y="321" width="1" height="7" fill="#ff00ff"/>
<rect x="404" y="320" width="1" height="2" fill="#ff00ff"/>
<rect x="405" y="320" width="1" height="5" fill="#ff00ff"/>
<rect x="406" y="322" width="1" height="3" fill="#ff00ff"/>
<rect x="407" y="322" width="1" height="1" fill="#ff00ff"/>
<rect x="408" y="322" width="1" height="1" fill="#ff00ff"/>
<rect x="409" y="322" width="1" height="6" fill="#ff00ff"/>
<rect x="410" y="326" width="1" height="2" fill="#ff00ff"/>
<rect x="411" y="323" width="1" height="4" fill="#ff00ff"/>
<rect x="412" y="323" width="1" height="2" fill="#ff00ff"/>
<rect x="413" y="324" width="1" height="2" fill="#ff00ff"/>
<rect x="414" y="325" width="1" height="1" fill="#ff00ff"/>
<rect x="415" y="321" width="1" height="5" fill="#ff00ff"/>
<rect x="416" y="321" width="1" height="3" fill="#ff00ff"/>
<rect x="417" y="323" width="1" height="1" fill="#ff00ff"/>
<rect x="418" y="323" width="1" height="3" fill="#ff00ff"/>
<rect x="419" y="323" width="1" height="3" fill="#ff00ff"/>
<rect x="420" y="323" width="1" height="1" fill="#ff00ff"/>
<rect x="421" y="320" width="1" height="4" fill="#ff00ff"/>
<rect x="422" y="320" width="1" height="2" fill="#ff00ff"/>
<rect x="423" y="321" width="1" height="2" fill="#ff00ff"/>
<rect x="424" y="322" width="1" height="4" fill="#ff00ff"/>
<rect x="425" y="322" width="1" height="4" fill="#ff00ff"/>
<rect x="426" y="322" width="1" height="1" fill="#ff00ff"/>
<rect x="427" y="297" width="1" height="134" fill="#d8d8d8"/>
</svg>
<div class="t" style="left:26.06px;top:10px;font-size:12px;font-weight:normal;font-style:normal;letter-spacing:0px;color:#2a2a2a;transform:scaleX(0.9412);">Nero CD-DVD Speed 4.7.7.0</div>
<div class="t" style="left:9.96px;top:30px;font-size:12px;font-weight:normal;font-style:normal;letter-spacing:0px;color:#6d6d6d;transform:scaleX(1.0385);">Datei</div>
<div class="t" style="left:53.00px;top:30px;font-size:12px;font-weight:normal;font-style:normal;letter-spacing:0px;color:#6d6d6d;transform:scaleX(1.0112);">Test durchführen</div>
<div class="t" style="left:156.07px;top:30px;font-size:12px;font-weight:normal;font-style:normal;letter-spacing:0px;color:#6d6d6d;transform:scaleX(0.9259);">Extra</div>
<div class="t" style="left:195.96px;top:30px;font-size:12px;font-weight:normal;font-style:normal;letter-spacing:0px;color:#6d6d6d;transform:scaleX(1.0435);">Hilfe</div>
<div class="t" style="left:175.86px;top:63px;font-size:12px;font-weight:normal;font-style:normal;letter-spacing:0px;color:#6d6d6d;transform:scaleX(1.1364);">[5:0]</div>
<div class="t" style="left:210.17px;top:63px;font-size:12px;font-weight:normal;font-style:normal;letter-spacing:0px;color:#6d6d6d;transform:scaleX(0.8317);">LITE-ON DVDRW SHM-165P6S MS0R</div>
<div class="t" style="left:497.07px;top:62px;font-size:12px;font-weight:normal;font-style:normal;letter-spacing:0px;color:#000;transform:scaleX(0.9333);">Stopp</div>
<div class="t" style="left:571.09px;top:62px;font-size:12px;font-weight:normal;font-style:normal;letter-spacing:0px;color:#8d8d8d;transform:scaleX(0.9130);">Beenden</div>
<div class="t" style="left:18.02px;top:102px;font-size:11px;font-weight:normal;font-style:normal;letter-spacing:0px;color:#000;transform:scaleX(0.9818);">Benchmark</div>
<div class="t" style="left:83.02px;top:102px;font-size:11px;font-weight:normal;font-style:normal;letter-spacing:0px;color:#000;transform:scaleX(0.9846);">Disk erstellen</div>
<div class="t" style="left:159.00px;top:102px;font-size:11px;font-weight:normal;font-style:normal;letter-spacing:0px;color:#000;">Disk-Info</div>
<div class="t" style="left:213.02px;top:99px;font-size:11px;font-weight:normal;font-style:normal;letter-spacing:0px;color:#000;transform:scaleX(0.9821);">Diskqualität</div>
<div class="t" style="left:278.96px;top:102px;font-size:11px;font-weight:normal;font-style:normal;letter-spacing:0px;color:#000;transform:scaleX(1.0444);">ScanDisk</div>
<div class="t" style="left:338.00px;top:102px;font-size:11px;font-weight:normal;font-style:normal;letter-spacing:0px;color:#000;transform:scaleX(0.9756);">TA-Jitter</div>
<div class="t" style="left:498.98px;top:124px;font-size:11px;font-weight:normal;font-style:normal;letter-spacing:0px;color:#000;transform:scaleX(1.0238);">Disk-Info</div>
<div class="t" style="left:500.00px;top:139px;font-size:11px;font-weight:normal;font-style:normal;letter-spacing:0px;color:#000;">Typ:</div>
<div class="t" style="left:545.00px;top:139px;font-size:11px;font-weight:normal;font-style:normal;letter-spacing:0px;color:#000080;">DVD+R</div>
<div class="t" style="left:498.92px;top:156px;font-size:11px;font-weight:normal;font-style:normal;letter-spacing:0px;color:#000;transform:scaleX(1.0833);">ID:</div>
<div class="t" style="left:546.00px;top:156px;font-size:11px;font-weight:normal;font-style:normal;letter-spacing:0px;color:#000080;">YUDEN000 T03</div>
<div class="t" style="left:499.03px;top:174px;font-size:11px;font-weight:normal;font-style:normal;letter-spacing:0px;color:#000;transform:scaleX(0.9706);">Datum:</div>
<div class="t" style="left:546.00px;top:174px;font-size:11px;font-weight:normal;font-style:normal;letter-spacing:0px;color:#000080;transform:scaleX(0.9649);">26 Jul 2009</div>
<div class="t" style="left:499.00px;top:191px;font-size:11px;font-weight:normal;font-style:normal;letter-spacing:0px;color:#000;">Label:</div>
<div class="t" style="left:499.02px;top:215px;font-size:11px;font-weight:normal;font-style:normal;letter-spacing:0px;color:#000;transform:scaleX(0.9846);">Einstellungen</div>
<div class="t" style="left:505.00px;top:236px;font-size:11px;font-weight:normal;font-style:normal;letter-spacing:0px;color:#000;">4 X</div>
<div class="t" style="left:502.04px;top:262px;font-size:11px;font-weight:normal;font-style:normal;letter-spacing:0px;color:#000;transform:scaleX(0.9600);">Start:</div>
<div class="t" style="left:558.00px;top:260px;font-size:11px;font-weight:normal;font-style:normal;letter-spacing:0px;color:#000;transform:scaleX(0.9545);">0000 MB</div>
<div class="t" style="left:502.00px;top:285px;font-size:11px;font-weight:normal;font-style:normal;letter-spacing:0px;color:#000;">Ende:</div>
<div class="t" style="left:558.00px;top:283px;font-size:11px;font-weight:normal;font-style:normal;letter-spacing:0px;color:#000;transform:scaleX(0.9545);">4179 MB</div>
<div class="t" style="left:517.01px;top:302px;font-size:11px;font-weight:normal;font-style:normal;letter-spacing:0px;color:#000;transform:scaleX(0.9892);">Schnelles Scannen</div>
<div class="t" style="left:516.99px;top:320px;font-size:11px;font-weight:normal;font-style:normal;letter-spacing:0px;color:#000;transform:scaleX(1.0123);">C1/PIE anzeigen</div>
<div class="t" style="left:516.99px;top:335px;font-size:11px;font-weight:normal;font-style:normal;letter-spacing:0px;color:#000;transform:scaleX(1.0125);">C2/PIF anzeigen</div>
<div class="t" style="left:518.00px;top:350px;font-size:11px;font-weight:normal;font-style:normal;letter-spacing:0px;color:#000;transform:scaleX(0.9718);">Jitter anzeigen</div>
<div class="t" style="left:518.00px;top:366px;font-size:11px;font-weight:normal;font-style:normal;letter-spacing:0px;color:#000;">Zeige Lesegeschw.</div>
<div class="t" style="left:518.00px;top:381px;font-size:11px;font-weight:normal;font-style:normal;letter-spacing:0px;color:#8d8d8d;transform:scaleX(0.9907);">Zeige Schreibgeschw.</div>
<div class="t" style="left:555.02px;top:404px;font-size:11px;font-weight:normal;font-style:normal;letter-spacing:0px;color:#000;transform:scaleX(0.9762);">Erweitert</div>
<div class="t" style="left:503.00px;top:438px;font-size:11px;font-weight:normal;font-style:normal;letter-spacing:0px;color:#000;transform:scaleX(0.9444);">Qualitätsindex:</div>
<div class="t" style="left:608.00px;top:438px;font-size:11px;font-weight:normal;font-style:normal;letter-spacing:0px;color:#000080;transform:scaleX(1.0833);">95</div>
<div class="t" style="left:501.02px;top:472px;font-size:11px;font-weight:normal;font-style:normal;letter-spacing:0px;color:#000;transform:scaleX(0.9800);">Fortschritt:</div>
<div class="t" style="left:598.00px;top:472px;font-size:11px;font-weight:normal;font-style:normal;letter-spacing:0px;color:#000080;transform:scaleX(0.9600);">99 %</div>
<div class="t" style="left:501.02px;top:488px;font-size:11px;font-weight:normal;font-style:normal;letter-spacing:0px;color:#000;transform:scaleX(0.9756);">Position:</div>
<div class="t" style="left:579.00px;top:488px;font-size:11px;font-weight:normal;font-style:normal;letter-spacing:0px;color:#000080;transform:scaleX(0.9545);">4178 MB</div>
<div class="t" style="left:502.00px;top:503px;font-size:11px;font-weight:normal;font-style:normal;letter-spacing:0px;color:#000;transform:scaleX(0.9878);">Geschwindigkeit:</div>
<div class="t" style="left:588.97px;top:503px;font-size:11px;font-weight:normal;font-style:normal;letter-spacing:0px;color:#000080;transform:scaleX(1.0323);">3.93 X</div>
<div class="t" style="left:35.05px;top:457px;font-size:11px;font-weight:normal;font-style:normal;letter-spacing:0px;color:#000;transform:scaleX(0.9524);">PI Errors</div>
<div class="t" style="left:22.00px;top:473px;font-size:11px;font-weight:normal;font-style:normal;letter-spacing:0px;color:#000;">Durchschnitt</div>
<div class="t" style="left:129.00px;top:473px;font-size:11px;font-weight:normal;font-style:normal;letter-spacing:0px;color:#000080;">2.41</div>
<div class="t" style="left:22.04px;top:488px;font-size:11px;font-weight:normal;font-style:normal;letter-spacing:0px;color:#000;transform:scaleX(0.9592);">Maximum:</div>
<div class="t" style="left:136.91px;top:488px;font-size:11px;font-weight:normal;font-style:normal;letter-spacing:0px;color:#000080;transform:scaleX(1.0909);">13</div>
<div class="t" style="left:23.00px;top:503px;font-size:11px;font-weight:normal;font-style:normal;letter-spacing:0px;color:#000;transform:scaleX(0.9512);">Gesamt:</div>
<div class="t" style="left:120.00px;top:503px;font-size:11px;font-weight:normal;font-style:normal;letter-spacing:0px;color:#000080;">40283</div>
<div class="t" style="left:193.06px;top:457px;font-size:11px;font-weight:normal;font-style:normal;letter-spacing:0px;color:#000;transform:scaleX(0.9412);">PI Failures</div>
<div class="t" style="left:180.00px;top:473px;font-size:11px;font-weight:normal;font-style:normal;letter-spacing:0px;color:#000;">Durchschnitt</div>
<div class="t" style="left:288.00px;top:473px;font-size:11px;font-weight:normal;font-style:normal;letter-spacing:0px;color:#000080;">0.00</div>
<div class="t" style="left:180.04px;top:488px;font-size:11px;font-weight:normal;font-style:normal;letter-spacing:0px;color:#000;transform:scaleX(0.9592);">Maximum:</div>
<div class="t" style="left:303.00px;top:488px;font-size:11px;font-weight:normal;font-style:normal;letter-spacing:0px;color:#000080;">2</div>
<div class="t" style="left:181.00px;top:503px;font-size:11px;font-weight:normal;font-style:normal;letter-spacing:0px;color:#000;transform:scaleX(0.9512);">Gesamt:</div>
<div class="t" style="left:291.00px;top:503px;font-size:11px;font-weight:normal;font-style:normal;letter-spacing:0px;color:#000080;">420</div>
<div class="t" style="left:352.00px;top:457px;font-size:11px;font-weight:normal;font-style:normal;letter-spacing:0px;color:#000;transform:scaleX(0.9583);">Jitter</div>
<div class="t" style="left:339.00px;top:473px;font-size:11px;font-weight:normal;font-style:normal;letter-spacing:0px;color:#000;">Durchschnitt</div>
<div class="t" style="left:435.03px;top:473px;font-size:11px;font-weight:normal;font-style:normal;letter-spacing:0px;color:#000080;transform:scaleX(0.9697);">7.99 %</div>
<div class="t" style="left:339.04px;top:488px;font-size:11px;font-weight:normal;font-style:normal;letter-spacing:0px;color:#000;transform:scaleX(0.9592);">Maximum:</div>
<div class="t" style="left:441.00px;top:488px;font-size:11px;font-weight:normal;font-style:normal;letter-spacing:0px;color:#000080;transform:scaleX(0.9643);">8.4 %</div>
<div class="t" style="left:339.02px;top:507px;font-size:11px;font-weight:normal;font-style:normal;letter-spacing:0px;color:#000;transform:scaleX(0.9831);">PO Ausfälle:</div>
<div class="t" style="left:466.00px;top:507px;font-size:11px;font-weight:normal;font-style:normal;letter-spacing:0px;color:#000080;">-</div>
<div class="t" style="left:29.00px;top:128px;font-size:12px;font-weight:normal;font-style:normal;letter-spacing:0px;color:#000;">20</div>
<div class="t" style="left:29.00px;top:155px;font-size:12px;font-weight:normal;font-style:normal;letter-spacing:0px;color:#000;">16</div>
<div class="t" style="left:29.00px;top:182px;font-size:12px;font-weight:normal;font-style:normal;letter-spacing:0px;color:#000;">12</div>
<div class="t" style="left:36.00px;top:208px;font-size:12px;font-weight:normal;font-style:normal;letter-spacing:0px;color:#000;">8</div>
<div class="t" style="left:35.00px;top:235px;font-size:12px;font-weight:normal;font-style:normal;letter-spacing:0px;color:#000;">4</div>
<div class="t" style="left:470.00px;top:128px;font-size:12px;font-weight:normal;font-style:normal;letter-spacing:0px;color:#000;">16</div>
<div class="t" style="left:470.00px;top:145px;font-size:12px;font-weight:normal;font-style:normal;letter-spacing:0px;color:#000;">14</div>
<div class="t" style="left:470.00px;top:161px;font-size:12px;font-weight:normal;font-style:normal;letter-spacing:0px;color:#000;">12</div>
<div class="t" style="left:470.00px;top:178px;font-size:12px;font-weight:normal;font-style:normal;letter-spacing:0px;color:#000;">10</div>
<div class="t" style="left:471.00px;top:195px;font-size:12px;font-weight:normal;font-style:normal;letter-spacing:0px;color:#000;">8</div>
<div class="t" style="left:470.00px;top:211px;font-size:12px;font-weight:normal;font-style:normal;letter-spacing:0px;color:#000;">6</div>
<div class="t" style="left:471.00px;top:228px;font-size:12px;font-weight:normal;font-style:normal;letter-spacing:0px;color:#000;">4</div>
<div class="t" style="left:470.00px;top:244px;font-size:12px;font-weight:normal;font-style:normal;letter-spacing:0px;color:#000;">2</div>
<div class="t" style="left:42.00px;top:272px;font-size:12px;font-weight:normal;font-style:normal;letter-spacing:0px;color:#000;">0.0</div>
<div class="t" style="left:88.00px;top:272px;font-size:12px;font-weight:normal;font-style:normal;letter-spacing:0px;color:#000;">0.5</div>
<div class="t" style="left:133.50px;top:272px;font-size:12px;font-weight:normal;font-style:normal;letter-spacing:0px;color:#000;">1.0</div>
<div class="t" style="left:180.50px;top:272px;font-size:12px;font-weight:normal;font-style:normal;letter-spacing:0px;color:#000;">1.5</div>
<div class="t" style="left:226.50px;top:272px;font-size:12px;font-weight:normal;font-style:normal;letter-spacing:0px;color:#000;">2.0</div>
<div class="t" style="left:273.50px;top:272px;font-size:12px;font-weight:normal;font-style:normal;letter-spacing:0px;color:#000;">2.5</div>
<div class="t" style="left:319.50px;top:272px;font-size:12px;font-weight:normal;font-style:normal;letter-spacing:0px;color:#000;">3.0</div>
<div class="t" style="left:366.50px;top:272px;font-size:12px;font-weight:normal;font-style:normal;letter-spacing:0px;color:#000;">3.5</div>
<div class="t" style="left:413.00px;top:272px;font-size:12px;font-weight:normal;font-style:normal;letter-spacing:0px;color:#000;">4.0</div>
<div class="t" style="left:460.00px;top:272px;font-size:12px;font-weight:normal;font-style:normal;letter-spacing:0px;color:#000;">4.5</div>
<div class="t" style="left:29.00px;top:290px;font-size:12px;font-weight:normal;font-style:normal;letter-spacing:0px;color:#000;">10</div>
<div class="t" style="left:470.00px;top:290px;font-size:12px;font-weight:normal;font-style:normal;letter-spacing:0px;color:#000;">10</div>
<div class="t" style="left:36.00px;top:317px;font-size:12px;font-weight:normal;font-style:normal;letter-spacing:0px;color:#000;">8</div>
<div class="t" style="left:471.00px;top:317px;font-size:12px;font-weight:normal;font-style:normal;letter-spacing:0px;color:#000;">8</div>
<div class="t" style="left:36.00px;top:344px;font-size:12px;font-weight:normal;font-style:normal;letter-spacing:0px;color:#000;">6</div>
<div class="t" style="left:470.00px;top:344px;font-size:12px;font-weight:normal;font-style:normal;letter-spacing:0px;color:#000;">6</div>
<div class="t" style="left:35.00px;top:370px;font-size:12px;font-weight:normal;font-style:normal;letter-spacing:0px;color:#000;">4</div>
<div class="t" style="left:471.00px;top:370px;font-size:12px;font-weight:normal;font-style:normal;letter-spacing:0px;color:#000;">4</div>
<div class="t" style="left:36.00px;top:397px;font-size:12px;font-weight:normal;font-style:normal;letter-spacing:0px;color:#000;">2</div>
<div class="t" style="left:470.00px;top:397px;font-size:12px;font-weight:normal;font-style:normal;letter-spacing:0px;color:#000;">2</div>
<div class="t" style="left:42.00px;top:434px;font-size:12px;font-weight:normal;font-style:normal;letter-spacing:0px;color:#000;">0.0</div>
<div class="t" style="left:88.00px;top:434px;font-size:12px;font-weight:normal;font-style:normal;letter-spacing:0px;color:#000;">0.5</div>
<div class="t" style="left:133.50px;top:434px;font-size:12px;font-weight:normal;font-style:normal;letter-spacing:0px;color:#000;">1.0</div>
<div class="t" style="left:180.50px;top:434px;font-size:12px;font-weight:normal;font-style:normal;letter-spacing:0px;color:#000;">1.5</div>
<div class="t" style="left:226.50px;top:434px;font-size:12px;font-weight:normal;font-style:normal;letter-spacing:0px;color:#000;">2.0</div>
<div class="t" style="left:273.50px;top:434px;font-size:12px;font-weight:normal;font-style:normal;letter-spacing:0px;color:#000;">2.5</div>
<div class="t" style="left:319.50px;top:434px;font-size:12px;font-weight:normal;font-style:normal;letter-spacing:0px;color:#000;">3.0</div>
<div class="t" style="left:366.50px;top:434px;font-size:12px;font-weight:normal;font-style:normal;letter-spacing:0px;color:#000;">3.5</div>
<div class="t" style="left:413.00px;top:434px;font-size:12px;font-weight:normal;font-style:normal;letter-spacing:0px;color:#000;">4.0</div>
<div class="t" style="left:460.00px;top:434px;font-size:12px;font-weight:normal;font-style:normal;letter-spacing:0px;color:#000;">4.5</div>
</body></html>
